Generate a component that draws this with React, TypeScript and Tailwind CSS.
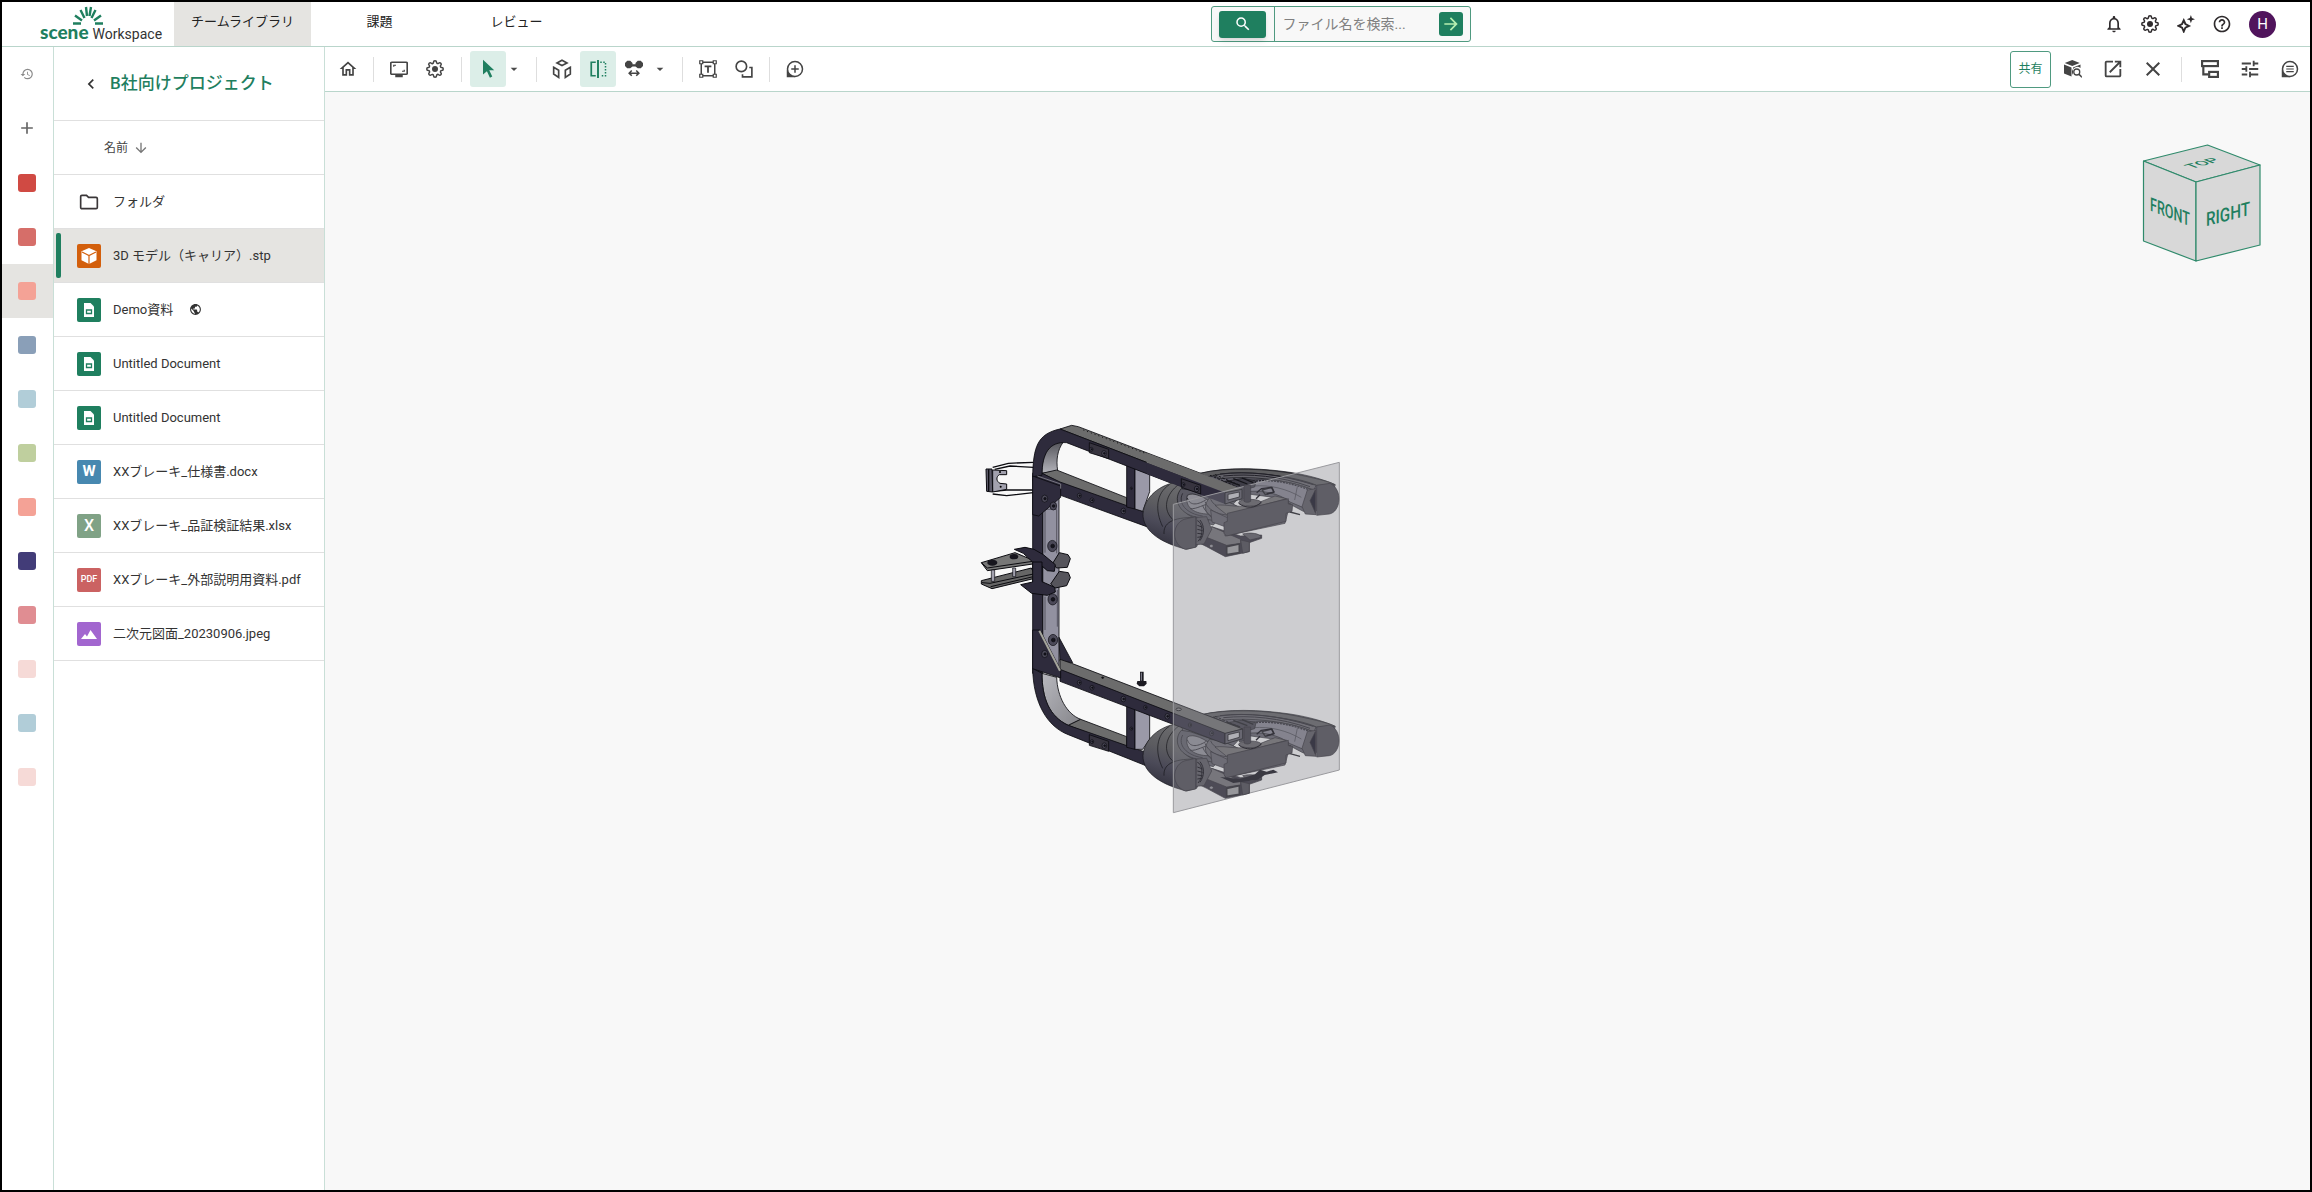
import React, { useState } from 'react';
import {
  MdAdd,
  MdArrowDownward,
  MdArrowDropDown,
  MdArrowForward,
  MdChevronLeft,
  MdClose,
  MdHelpOutline,
  MdHistory,
  MdOpenInNew,
  MdOutlineHome,
  MdOutlineNotifications,
  MdPublic,
  MdSearch,
  MdTune,
} from 'react-icons/md';
import clsx from 'clsx';

type FileKind = 'folder' | 'model' | 'doc' | 'word' | 'excel' | 'pdf' | 'image';

interface FileItem {
  name: string;
  kind: FileKind;
  isPublic?: boolean;
}

const FILES: FileItem[] = [
  { name: 'フォルダ', kind: 'folder' },
  { name: '3D モデル（キャリア）.stp', kind: 'model' },
  { name: 'Demo資料', kind: 'doc', isPublic: true },
  { name: 'Untitled Document', kind: 'doc' },
  { name: 'Untitled Document', kind: 'doc' },
  { name: 'XXブレーキ_仕様書.docx', kind: 'word' },
  { name: 'XXブレーキ_品証検証結果.xlsx', kind: 'excel' },
  { name: 'XXブレーキ_外部説明用資料.pdf', kind: 'pdf' },
  { name: '二次元図面_20230906.jpeg', kind: 'image' },
];

const TEAMS = [
  'bg-[#d04a43]',
  'bg-[#d66e69]',
  'bg-[#f4a296]',
  'bg-[#8a9fb8]',
  'bg-[#b1cdd8]',
  'bg-[#bfcf9e]',
  'bg-[#f4a296]',
  'bg-[#423c78]',
  'bg-[#e08d92]',
  'bg-[#f6dad7]',
  'bg-[#b1cdd8]',
  'bg-[#f6dad7]',
];

const TABS = ['チームライブラリ', '課題', 'レビュー'];

/* ---------- icons ---------- */

const Svg: React.FC<{ size?: number; children: React.ReactNode }> = ({ size = 18, children }) => (
  <svg width={size} height={size} viewBox="0 0 24 24" fill="none" stroke="currentColor" strokeWidth="2" aria-hidden="true">
    {children}
  </svg>
);

const GearIcon = () => (
  <Svg>
    <path d="M19.4 15a1.65 1.65 0 0 0 .33 1.82l.06.06a2 2 0 1 1-2.83 2.83l-.06-.06a1.65 1.65 0 0 0-1.82-.33 1.65 1.65 0 0 0-1 1.51V21a2 2 0 0 1-4 0v-.09A1.65 1.65 0 0 0 9 19.4a1.65 1.65 0 0 0-1.82.33l-.06.06a2 2 0 1 1-2.83-2.83l.06-.06a1.65 1.65 0 0 0 .33-1.82 1.65 1.65 0 0 0-1.51-1H3a2 2 0 0 1 0-4h.09A1.65 1.65 0 0 0 4.6 9a1.65 1.65 0 0 0-.33-1.82l-.06-.06a2 2 0 1 1 2.83-2.83l.06.06a1.65 1.65 0 0 0 1.82.33H9a1.65 1.65 0 0 0 1-1.51V3a2 2 0 0 1 4 0v.09a1.65 1.65 0 0 0 1 1.51 1.65 1.65 0 0 0 1.82-.33l.06-.06a2 2 0 1 1 2.83 2.83l-.06.06a1.65 1.65 0 0 0-.33 1.82V9a1.65 1.65 0 0 0 1.51 1H21a2 2 0 0 1 0 4h-.09a1.65 1.65 0 0 0-1.51 1z" />
    <circle cx="12" cy="12" r="4" fill="currentColor" stroke="none" />
  </Svg>
);

const SparkleIcon = () => (
  <Svg>
    <path d="M9 7l2.2 5L16 14.5l-4.8 2.300L9 22l-2.200-5.200L2 14.5 6.800 12z" strokeWidth="2.500" />
    <path d="M18.500 0l1.400 4.100L24 5.500l-4.100 1.400L18.500 11l-1.400-4.100L13 5.500l4.100-1.400z" fill="currentColor" stroke="none" />
  </Svg>
);

const ScreenIcon = () => (
  <Svg>
    <rect x="1" y="3" width="22" height="16" rx="1.500" strokeWidth="2.300" />
    <path d="M5 9V7h3M19 13v2h-3" strokeWidth="1.600" />
    <path d="M7 21.500h10" strokeWidth="3" />
  </Svg>
);

const CursorIcon = () => (
  <Svg size={20}>
    <path d="M6 1l13.500 12.500h-6l3.600 7.600-2.800 1.300-3.600-7.800L6 18.500z" fill="currentColor" stroke="none" />
  </Svg>
);

const ExplodeIcon = () => (
  <Svg size={20}>
    <path d="M12 1.500l6 3.200-6 3.200-6-3.200zM2 10l6 3.500V22l-6-4zM22 10l-6 3.500V22l6-4z" strokeWidth="2" />
  </Svg>
);

const SectionIcon = () => (
  <Svg>
    <path d="M9 3H3v18h6" strokeWidth="2.300" />
    <path d="M12 0v24" strokeWidth="2.600" />
    <path d="M15 3h7v18h-7" strokeDasharray="2 2" />
  </Svg>
);

const CompareIcon = () => (
  <Svg>
    <path d="M3 1h4l3 3v1.500h4V4l3-3h4l3 3v4l-3 3h-4l-3-2.500h-4L7 11H3L0 8V4z" fill="currentColor" stroke="none" />
    <path d="M6 17.500h12M9 14l-3.500 3.500L9 21M15 14l3.500 3.500L15 21" strokeWidth="2" />
  </Svg>
);

const TextBoxIcon = () => (
  <Svg>
    <path d="M4 3h16M4 21h16M3 4v16M21 4v16" />
    <path d="M1 1h4v4H1zM19 1h4v4h-4zM1 19h4v4H1zM19 19h4v4h-4z" fill="#fff" strokeWidth="1.600" />
    <path d="M7.500 8.500h9M12 8v9" strokeWidth="2.400" />
  </Svg>
);

const ShapesIcon = () => (
  <Svg>
    <circle cx="8.500" cy="8.500" r="7" strokeWidth="2.200" />
    <path d="M19 10h3.500v12.500H10V19" strokeWidth="2.200" />
  </Svg>
);

const CommentAddIcon = () => (
  <Svg>
    <path d="M1 13v10h11z" fill="currentColor" stroke="none" />
    <circle cx="12" cy="12" r="10" fill="#fff" />
    <path d="M12 7v10M7 12h10" />
  </Svg>
);

const CommentListIcon = () => (
  <Svg>
    <path d="M1 13v10h11z" fill="currentColor" stroke="none" />
    <circle cx="12" cy="12" r="10" fill="#fff" />
    <path d="M7 8.500h10M7 12h10M7 15.500h10" strokeWidth="1.500" />
  </Svg>
);

const ModelSearchIcon = () => (
  <Svg>
    <path d="M11 0l10 4-10 4L1 4z" fill="currentColor" stroke="none" />
    <path d="M0 6l10 4v12L0 18zM12 10l10-4v4.500a7 7 0 0 0-10 9.500z" fill="currentColor" stroke="none" />
    <circle cx="17" cy="16" r="4" strokeWidth="1.700" />
    <path d="M19.800 18.800L24 23" />
  </Svg>
);

const TreeIcon = () => (
  <Svg size={20}>
    <rect x="2.500" y="2.500" width="19" height="6" strokeWidth="2.600" />
    <rect x="11" y="15.500" width="10.500" height="6" strokeWidth="2.600" />
    <path d="M4 9v9.500h6" strokeWidth="2.600" />
  </Svg>
);

const FolderIcon = () => (
  <Svg size={20}>
    <path d="M2 5.500c0-.8.7-1.500 1.500-1.500H9l2.500 2.500h9c.8 0 1.500.7 1.500 1.500v10.500c0 .8-.7 1.500-1.500 1.500h-17c-.8 0-1.500-.7-1.500-1.500z" />
  </Svg>
);

const TILE = 'flex h-6 w-6 items-center justify-center rounded-[2px] text-white';

const FileIcon: React.FC<{ kind: FileKind }> = ({ kind }) => {
  switch (kind) {
    case 'folder':
      return <span className="flex h-6 w-6 items-center justify-center text-[#3a3638]"><FolderIcon /></span>;
    case 'model':
      return (
        <span className={clsx(TILE, 'bg-[#d35f0c]')}>
          <svg width="18" height="18" viewBox="0 0 18 18" aria-hidden="true">
            <path d="M9 1l7.500 3.300v9L9 17l-7.500-3.700v-9z" fill="#fff" />
            <path d="M2 5l7 3.500L16 5M9 8.500V17" fill="none" stroke="#d35f0c" strokeWidth="1.200" />
          </svg>
        </span>
      );
    case 'doc':
      return (
        <span className={clsx(TILE, 'bg-[#1f7f5f]')}>
          <svg width="12" height="16" viewBox="0 0 12 16" aria-hidden="true">
            <path d="M1 1h6.500L11 4.500V15H1z" fill="#fff" />
            <path d="M3.500 8h5v3.500h-5z" fill="none" stroke="#1f7f5f" strokeWidth="1.300" />
          </svg>
        </span>
      );
    case 'word':
      return <span className={clsx(TILE, 'bg-[#4788b0] text-[15px] font-bold')}>W</span>;
    case 'excel':
      return <span className={clsx(TILE, 'bg-[#80a286] text-[16px] font-medium')}>X</span>;
    case 'pdf':
      return <span className={clsx(TILE, 'bg-[#cb6262] text-[9px] font-medium')}>PDF</span>;
    default:
      return (
        <span className={clsx(TILE, 'bg-[#a266cf]')}>
          <svg width="16" height="16" viewBox="0 0 16 16" aria-hidden="true">
            <path d="M0 13l4-5 2 2.500L9.500 4l6.500 9z" fill="#fff" />
          </svg>
        </span>
      );
  }
};

/* ---------- header ---------- */

const Logo = () => (
  <a href="#" className="flex w-[172px] shrink-0 flex-col items-start pt-1 pl-[38px] no-underline">
    <svg width="32" height="19" viewBox="0 0 32 19" fill="none" stroke="#1f7f5f" strokeWidth="2.400" className="ml-8" aria-hidden="true">
      <path d="M1 17.500h8M23 17.500h8M3 9.500l7 5M29 9.500l-7 5M8.500 4l4 8M23.500 4l-4 8M14 1l1 9M19 1l-1.500 9" />
    </svg>
    <span className="flex items-baseline gap-1">
      <span className="font-['Lato'] text-[19px] leading-[14px] font-black text-[#1f7f5f]">scene</span>
      <span className="text-[14px] leading-[14px] text-[#333]">Workspace</span>
    </span>
  </a>
);

const HeaderButton: React.FC<{ label: string; children: React.ReactNode }> = ({ label, children }) => (
  <button type="button" aria-label={label} className="flex h-9 w-9 items-center justify-center text-[#2f2b2d]">
    {children}
  </button>
);

const Header = () => (
  <header className="flex h-[45px] items-stretch border-b border-[#b9d5cb] bg-white">
    <Logo />
    <nav className="flex">
      {TABS.map((tab, i) => (
        <a
          key={tab}
          href="#"
          className={clsx(
            'flex w-[137px] items-center justify-center pb-1 text-[13px] text-[#222]',
            i === 0 && 'bg-[#e5e4e1]',
          )}
        >
          {tab}
        </a>
      ))}
    </nav>
    <div className="flex flex-1 items-center justify-center">
      <form className="flex h-9 w-[260px] items-center rounded-[3px] border border-[#4f9a80] bg-[#f8f8f8]" onSubmit={(e) => e.preventDefault()}>
        <div className="flex h-full w-[63px] items-center justify-center border-r border-[#4f9a80]">
          <button type="button" aria-label="検索" className="flex h-[27px] w-[47px] items-center justify-center rounded-[3px] bg-[#1f7f5f] text-white shadow-md">
            <MdSearch size={18} />
          </button>
        </div>
        <input
          aria-label="ファイル名を検索"
          placeholder="ファイル名を検索..."
          className="min-w-0 flex-1 bg-transparent pl-2 text-[14px] text-[#333] outline-none placeholder:text-[#808080]"
        />
        <button type="submit" aria-label="実行" className="mr-[7px] flex h-6 w-6 items-center justify-center rounded-[3px] bg-[#1f7f5f] text-[#b7f0b0]">
          <MdArrowForward size={20} />
        </button>
      </form>
    </div>
    <div className="flex items-center pr-[34px]">
      <HeaderButton label="通知"><MdOutlineNotifications size={20} /></HeaderButton>
      <HeaderButton label="設定"><GearIcon /></HeaderButton>
      <HeaderButton label="AI"><SparkleIcon /></HeaderButton>
      <HeaderButton label="ヘルプ"><MdHelpOutline size={20} /></HeaderButton>
      <button type="button" className="ml-[9px] flex h-[27px] w-[27px] items-center justify-center rounded-full bg-[#50145c] text-[15px] text-white">
        H
      </button>
    </div>
  </header>
);

/* ---------- left columns ---------- */

const TeamRail = () => (
  <nav className="flex w-[52px] shrink-0 flex-col border-r border-[#c9dfd7] bg-white">
    <button type="button" aria-label="履歴" className="flex h-[54px] items-center justify-center pr-px text-[#8a8a8a]">
      <MdHistory size={14} />
    </button>
    <button type="button" aria-label="追加" className="flex h-[54px] items-center justify-center pr-px text-[#666]">
      <MdAdd size={20} />
    </button>
    <div className="flex flex-col pt-px">
      {TEAMS.map((color, i) => (
        <button
          key={i}
          type="button"
          aria-label={`チーム ${i + 1}`}
          className={clsx('flex h-[54px] items-center justify-center pr-px', i === 2 && 'bg-[#e5e4e1]')}
        >
          <span className={clsx('h-[18px] w-[18px] rounded-[3px]', color)} />
        </button>
      ))}
    </div>
  </nav>
);

const FilePanel = () => {
  const [selected, setSelected] = useState(1);
  return (
    <aside className="w-[271px] shrink-0 border-r border-[#c9dfd7] bg-white">
      <div className="flex h-[74px] items-center border-b border-[#e0e0e0] pl-[27px]">
        <button type="button" aria-label="戻る" className="flex h-5 w-5 items-center justify-center text-[#333]">
          <MdChevronLeft size={20} />
        </button>
        <h1 className="ml-[9px] text-[17px] font-medium text-[#1f7f5f]">B社向けプロジェクト</h1>
      </div>
      <button type="button" className="flex h-[54px] w-full items-center gap-[5px] border-b border-[#e0e0e0] pl-[50px] text-[12px] text-[#444]">
        名前
        <MdArrowDownward size={16} className="text-[#777]" />
      </button>
      <ul>
        {FILES.map((file, i) => (
          <li key={i}>
            <button
              type="button"
              onClick={() => setSelected(i)}
              className={clsx(
                'relative flex h-[54px] w-full items-center gap-3 border-b border-[#e0e0e0] pl-[23px] text-[13px] text-[#333]',
                selected === i && 'bg-[#e5e4e1]',
              )}
            >
              {selected === i && <span className="absolute top-1 bottom-1 left-[2px] w-[5px] rounded-[2px] bg-[#1f7f5f]" />}
              <FileIcon kind={file.kind} />
              <span>{file.name}</span>
              {file.isPublic && <MdPublic size={13} className="ml-1" />}
            </button>
          </li>
        ))}
      </ul>
    </aside>
  );
};

/* ---------- viewer toolbar ---------- */

const ToolButton: React.FC<{ label: string; active?: boolean; children: React.ReactNode }> = ({ label, active, children }) => (
  <button
    type="button"
    aria-label={label}
    className={clsx(
      'flex h-9 w-9 items-center justify-center rounded-[3px]',
      active ? 'bg-[#dceee8] text-[#1f7f5f]' : 'text-[#444]',
    )}
  >
    {children}
  </button>
);

const Caret: React.FC<{ label: string }> = ({ label }) => (
  <button type="button" aria-label={label} className="flex h-9 w-[23px] items-center text-[#4a4a4a]">
    <MdArrowDropDown size={16} />
  </button>
);

const Divider: React.FC<{ className?: string }> = ({ className = 'mx-[7px]' }) => (
  <span className={clsx('h-[25px] w-px bg-[#dedede]', className)} />
);

const Toolbar = () => (
  <div className="flex h-[45px] items-center border-b border-[#b9d5cb] bg-white pr-[2px] pl-[5px]">
    <ToolButton label="ホーム"><MdOutlineHome size={20} /></ToolButton>
    <Divider />
    <ToolButton label="表示"><ScreenIcon /></ToolButton>
    <ToolButton label="設定"><GearIcon /></ToolButton>
    <Divider className="mx-2" />
    <ToolButton label="選択" active><CursorIcon /></ToolButton>
    <Caret label="選択メニュー" />
    <Divider />
    <ToolButton label="分解"><ExplodeIcon /></ToolButton>
    <ToolButton label="断面" active><SectionIcon /></ToolButton>
    <ToolButton label="計測"><CompareIcon /></ToolButton>
    <Caret label="計測メニュー" />
    <Divider />
    <ToolButton label="テキスト"><TextBoxIcon /></ToolButton>
    <ToolButton label="図形"><ShapesIcon /></ToolButton>
    <Divider />
    <ToolButton label="コメント追加"><CommentAddIcon /></ToolButton>
    <div className="ml-auto flex items-center gap-1">
      <button type="button" className="flex h-[37px] w-[41px] items-center justify-center rounded-[3px] border border-[#4f9a80] text-[12px] text-[#1f7f5f]">
        共有
      </button>
      <ToolButton label="モデル検索"><ModelSearchIcon /></ToolButton>
      <ToolButton label="別ウィンドウで開く"><MdOpenInNew size={22} /></ToolButton>
      <ToolButton label="閉じる"><MdClose size={24} /></ToolButton>
      <Divider className="mx-[6px]" />
      <ToolButton label="ツリー"><TreeIcon /></ToolButton>
      <ToolButton label="調整"><MdTune size={22} /></ToolButton>
      <ToolButton label="コメント"><CommentListIcon /></ToolButton>
    </div>
  </div>
);

/* ---------- 3D scene ---------- */

// Each face is an 80x80 sheet, placed by the matrix of its own plane.
const ViewCube = () => (
  <svg width="160" height="150" viewBox="0 0 160 150" className="absolute top-[38px] right-[30px]" aria-label="ビューキューブ">
    <g fill="#d8d8d8" stroke="#2f8a6b" strokeWidth="1.200" strokeLinejoin="round">
      <path d="M23.500 31L87.500 15 140 35 76 52z" />
      <path d="M23.500 31L76 52v79L23.500 111z" />
      <path d="M76 52l64-17v80l-64 16z" />
    </g>
    <g fill="#1f7f5f" fontFamily="Roboto, sans-serif" fontSize="19" fontWeight="500" textAnchor="middle">
      <text transform="matrix(.66 .26 0 1 23.500 31)" x="40" y="47">FRONT</text>
      <text transform="matrix(.8 -.21 0 1 76 52)" x="40" y="47">RIGHT</text>
      <text transform="matrix(.8 -.21 .66 .26 23.500 31)" x="40" y="47">TOP</text>
    </g>
  </svg>
);

const Screw: React.FC<{ x: number; y: number; r?: number }> = ({ x, y, r = 7 }) => (
  <g stroke="#0b0b10" strokeWidth="2">
    <ellipse cx={x} cy={y} rx={r} ry={r * 1.2} fill="#4b4958" />
    <circle cx={x + 1} cy={y} r={r / 2.5} fill="#16151d" />
  </g>
);

const WheelBack = () => (
  <g stroke="#15151a" strokeWidth="2" strokeLinejoin="round">
    {/* far arc */}
    <path d="M720 190C800 170 900 174 990 187C1050 196 1100 212 1126 224L1100 300L1030 304L985 280L940 262L850 250L760 345L700 330L650 300L640 222z" fill="#5c5b66" />
    <path d="M720 190C800 170 930 176 1010 193S1110 216 1124 224L1070 226C1010 200 880 180 740 200z" fill="#5d5d5f" />
    <path d="M760 196C850 180 960 190 1068 226L1062 240C980 208 870 196 780 206z" fill="#64636a" />
    <path d="M780 192C860 182 960 192 1060 224M790 198C870 190 960 198 1050 230" fill="none" stroke="#222129" strokeWidth="3" />
    <path d="M860 212C930 204 1000 216 1052 238L1028 292L990 276C960 250 900 238 860 246z" fill="#83828f" />
    <path d="M870 215C930 206 990 218 1044 238" fill="none" stroke="#26252d" strokeWidth="4" strokeDasharray="6 3" />
    <path d="M880 228C930 224 980 236 1024 262M1012 230L1004 270" fill="none" stroke="#34333b" />
    {/* near tyre */}
    <path d="M655 216C600 222 552 262 549 312C548 356 590 396 680 418L710 410L745 330L700 322C668 310 650 280 668 232z" fill="url(#tire)" />
    <path d="M628 224C588 250 584 300 608 350M658 222C616 252 606 300 640 330M612 372C610 340 634 322 706 322" fill="none" />
    <path d="M664 236C640 262 650 310 712 322L800 340L850 300C830 285 770 262 755 262L690 240z" fill="#5a5963" />
    <path d="M682 256C700 244 735 262 762 284L744 312C710 312 672 296 682 256z" fill="#8f8e96" />
    <path d="M668 250C652 280 680 312 728 318M682 264C690 290 716 284 740 268M690 296C712 298 730 282 755 280" fill="none" stroke="#2f2e36" strokeWidth="3" />
    <path d="M748 264C780 262 830 285 850 300L800 340C750 330 718 300 748 264z" fill="#66656c" />
    <path d="M735 275C745 300 770 312 800 315M728 287C740 315 765 330 796 332M752 268C762 290 790 300 820 300" fill="none" stroke="#2f2e36" strokeWidth="3" />
    {/* axle block */}
    <path d="M790 215l60-10 38 8-4 18-30 8v28l-16 4v-30l-48-8z" fill="#3e3d47" />
    <path d="M800 212l40 14M820 206l42 16M846 204l34 14M906 240l30-8 6 14-26 8zM990 280v26l30 8" fill="none" strokeWidth="4" />
    <path d="M740 200l80 36M750 196l80 34M765 194l70 30" fill="none" strokeWidth="3" strokeDasharray="8 4" />
  </g>
);

// Faces cut by the section plane, drawn over it.
const WheelCut = () => (
  <g stroke="#45444b" strokeWidth="2" strokeLinejoin="round">
    <path d="M755 350L842 378L905 375L905 385L868 398L868 425L796 440L740 410L716 398z" fill="#4d4b56" />
    <path d="M755 350L842 388L842 400L800 406L730 378z" fill="#77767c" />
    <path d="M842 390L868 396V424L848 430z" fill="#5d5c64" />
    <path d="M800 410L838 402V428L800 434z" fill="#97979b" strokeWidth="5" />
    <path d="M848 372C870 366 900 370 904 382L870 390z" fill="#696870" />
    <ellipse cx="754" cy="408" rx="6" ry="5" fill="#8d8c94" />
    <path d="M752 300L800 322L945 262L985 272L988 290L975 340L795 378L795 350L756 336z" fill="#6d6c75" />
    <path d="M765 286C800 280 840 300 895 278L945 258L980 266L800 314z" fill="#77767a" />
    <path d="M802 310L985 266L985 282L998 284L996 304L978 310L978 334L800 378L792 370V338L802 334z" fill="#5f5e66" />
    <ellipse cx="870" cy="278" rx="34" ry="10" fill="#6c6b71" />
    <path d="M852 226h20v48c-6 4-14 4-20 0z" fill="#54535c" />
    <path d="M836 280c20 16 50 16 68-4" fill="none" stroke="#2f2e36" strokeWidth="3" />
    <path d="M890 248l14-12 30-4 8 14-22 6M900 254l-12 12" fill="none" stroke="#33323a" strokeWidth="4" />
    <path d="M710 322L740 320L755 358L732 402L708 404z" fill="#66656d" />
    <path d="M712 332c16 4 20 44 2 62M720 330c14 18 14 42 0 62M712 346l16 6M712 358l16 4M712 370l16 2M712 382l14-2" fill="none" stroke="#33323a" strokeWidth="3" />
    <path d="M672 328L707 320V412L676 418C634 404 634 344 672 328z" fill="#5f5e66" />
    <path d="M1042 240L1068 236V314L1036 312L1026 290z" fill="#66656d" />
    <path d="M1066 240V308L1050 272z" fill="#3a3946" />
    <path d="M1070 226L1110 220C1150 238 1142 306 1108 312L1070 316z" fill="#5f5e66" />
  </g>
);

const CarrierModel = () => (
  <svg width="400" height="420" viewBox="0 0 1200 1260" className="absolute top-[318px] left-[635px]" aria-label="キャリア">
    <defs>
      <linearGradient id="tire" x1="0.600" y1="0" x2="0.300" y2="1">
        <stop offset="0" stopColor="#6e6e70" />
        <stop offset="0.400" stopColor="#5c5c60" />
        <stop offset="0.650" stopColor="#4b4a58" />
        <stop offset="1" stopColor="#2f2e3a" />
      </linearGradient>
      <linearGradient id="bend" x1="0" y1="0" x2="0" y2="1">
        <stop offset="0" stopColor="#55555b" />
        <stop offset="1" stopColor="#b4b4bb" />
      </linearGradient>
      <linearGradient id="bendLow" x1="0" y1="0" x2="1" y2="1">
        <stop offset="0" stopColor="#b8b8be" />
        <stop offset="1" stopColor="#85858a" />
      </linearGradient>
    </defs>

    {/* upper mounting bracket */}
    <g stroke="#0b0b10" strokeWidth="4" strokeLinejoin="round">
      <path d="M98 172L145 160L220 157M104 178L150 168L220 172M100 244L140 240L220 240M98 252L140 257L220 248" fill="none" />
      <path d="M98 180L140 182V194L118 194C108 200 108 214 120 220L140 222V238L98 246z" fill="#a2a1ae" strokeWidth="3" />
      <path d="M78 177H96L98 246L80 244z" fill="#5b5968" strokeWidth="3" />
      <path d="M86 178v66" />
    </g>
    <circle cx="120" cy="186" r="3" />
    <circle cx="122" cy="230" r="3" />

    <g stroke="#0b0b10" strokeWidth="2.500" strokeLinejoin="round">
      {/* column */}
      <path d="M248 230H297V770L262 770L248 700z" fill="#9291a0" />
      <path d="M218 190H248V790H218z" fill="#2e2b3c" />
      <path d="M255 318v-20h36M255 318v110M290 300v130M255 560v100M292 540v110" fill="none" stroke="#4c4b56" />

      {/* upper frame */}
      <path d="M310 96C292 120 288 150 293 182L246 190C244 130 270 96 310 96z" fill="url(#bend)" />
      <path d="M246 190L290 180L500 263V292L300 218z" fill="#6c6c6c" />
      <path d="M246 190L300 216L560 308V350L302 256L218 210z" fill="#2e2b3c" />
      <path d="M500 166L525 176V297L500 291z" fill="#2e2b3c" />
      <path d="M525 176L569 192V245L548 304L525 297z" fill="#9a99a8" />
      <path d="M300 57L335 46L355 50L848 238L795 248z" fill="#6c6c6c" />
      <path d="M218 200C220 110 232 72 300 57L795 248V282L320 98C268 94 246 130 246 196z" fill="#2e2b3c" />
      <path d="M370 60L720 192" stroke="#111" strokeWidth="3" strokeDasharray="3 9" />
      <path d="M388 98L446 118V146L388 128z" fill="#37343f" />
      <path d="M218 198L302 228V262L236 318L218 314z" fill="#2e2b3c" />
      <path d="M232 198L302 222V236" fill="none" stroke="#77767f" strokeWidth="3" />
    </g>
    <Screw x={254} y={266} r={9} />
    <Screw x={280} y={288} r={10} />
    <Screw x={394} y={118} r={5} />
    <Screw x={432} y={130} r={7} />
    <Screw x={358} y={257} r={6} />
    <Screw x={396} y={271} r={6} />
    <Screw x={490} y={303} r={7} />
    <Screw x={514} y={235} r={3} />

    {/* centre clamp */}
    <g stroke="#0b0b10" strokeWidth="3" strokeLinejoin="round">
      <path d="M298 428L324 434L331 446L322 472L290 474L278 460z" fill="#56555c" />
      <path d="M298 484L325 488L331 503L320 527L285 534L272 522z" fill="#56555c" />
      <path d="M64 458L165 428L222 452L218 462L82 482z" fill="#777" />
      <path d="M64 458L82 474L218 454" fill="none" />
      <path d="M64 512L214 474L220 486V506L96 536L64 522z" fill="#666" />
      <path d="M66 518L90 520L220 492M92 530L220 500" fill="none" strokeWidth="3" />
      <path d="M94 480h10v34H94zM158 474h9v26h-9z" fill="#a2a1ae" strokeWidth="2" />
      <path d="M163 418L195 412L222 418L250 434L286 464L283 484L262 482L246 468L218 456L190 430z" fill="#2e2b3c" />
      <path d="M218 456H246V515L284 532L286 546L262 556L215 550L182 524L218 516z" fill="#2e2b3c" />
    </g>
    <ellipse cx="97" cy="458" rx="15" ry="9" fill="#16151d" />
    <ellipse cx="162" cy="440" rx="13" ry="8" fill="#16151d" />
    <Screw x={277} y={408} r={14} />
    <Screw x={278} y={568} r={14} />
    <Screw x={279} y={690} r={14} />

    {/* lower frame */}
    <g transform="translate(0 630)" stroke="#0b0b10" strokeWidth="2.500" strokeLinejoin="round">
      <path d="M297 52L338 128L300 124z" fill="#2e2b3c" />
      <path d="M246 160L290 172C292 230 320 282 362 298L325 316C268 290 246 235 246 160z" fill="url(#bendLow)" />
      <path d="M325 316L362 298L500 350V386z" fill="#6c6c6c" />
      <path d="M218 145L246 160C246 235 268 290 325 316L555 396V436L325 344C262 320 220 250 218 145z" fill="#2e2b3c" />
      <path d="M500 256L525 264V388L500 382z" fill="#2e2b3c" />
      <path d="M525 264L569 286V358L548 388L525 388z" fill="#9a99a8" />
      <path d="M388 344L446 364V394L388 376z" fill="#37343f" />
    </g>
    <Screw x={396} y={995} r={5} />
    <Screw x={433} y={1007} r={7} />
    <Screw x={514} y={956} r={4} />

    <WheelBack />
    <g transform="translate(0 725)">
      <WheelBack />
    </g>

    {/* rails passing in front of the wheels */}
    <g stroke="#0b0b10" strokeWidth="2.500" strokeLinejoin="round">
      <path d="M560 129L600 144L848 238L795 248L560 158z" fill="#6c6c6c" stroke="none" />
      <path d="M560 158L795 248V282L560 191z" fill="#2e2b3c" stroke="none" />
      <path d="M664 206L722 226V252L664 232z" fill="#37343f" />
      <path d="M795 248L846 238V266L795 282z" fill="#56555f" />
      <path d="M804 253L838 246V261L804 270z" fill="#c9c9cd" />
      <path d="M300 748L335 760L848 957L795 972L300 784z" fill="#6c6c6c" />
      <path d="M300 778L795 970V1002L300 814z" fill="#2e2b3c" />
      <path d="M795 970L848 957V986L795 1002z" fill="#56555f" />
      <path d="M804 974L838 966V982L804 992z" fill="#c9c9cd" />
      <path d="M218 660L240 660L302 780V804L218 776z" fill="#2e2b3c" />
      <path d="M238 662L300 782" stroke="#a5a59c" strokeWidth="6" />
      <ellipse cx="656" cy="898" rx="8" ry="4" fill="#8a8a8a" />
      <ellipse cx="428" cy="803" rx="3" ry="2" fill="#111" />
    </g>
    <Screw x={670} y={224} r={5} />
    <Screw x={710} y={237} r={7} />
    <Screw x={254} y={732} r={9} />
    <Screw x={358} y={818} r={6} />
    <Screw x={396} y={833} r={6} />
    <Screw x={490} y={867} r={7} />
    <Screw x={556} y={892} r={5} />
    <Screw x={622} y={919} r={7} />
    <Screw x={690} y={945} r={5} />
    <Screw x={755} y={970} r={6} />

    {/* loose bolt */}
    <path d="M540 785h11v28h8l1 8-8 8h-14l-8-8 2-8h8z" fill="#1c1b22" />
    <path d="M544 788v24" stroke="#8a8a99" strokeWidth="3" />

    {/* section plane */}
    <path d="M640 283L1138 157V1080L640 1208z" fill="#87878f" fillOpacity="0.380" stroke="#9a9a9e" strokeWidth="3" />
    <WheelCut />
    <g transform="translate(0 725)">
      <WheelCut />
      <path d="M780 376l60 6 45-14 15-14 20 6 20-6 14 8-40 8-20 14-74 10z" fill="#3a3942" />
    </g>
  </svg>
);

export default function App() {
  return (
    <div className="flex min-h-screen flex-col border-2 border-black bg-white font-[Roboto,'Noto_Sans_CJK_JP',sans-serif]">
      <Header />
      <div className="flex flex-1 items-stretch">
        <TeamRail />
        <FilePanel />
        <section className="flex min-w-0 flex-1 flex-col">
          <Toolbar />
          <main className="relative flex-1 overflow-hidden bg-[#f8f8f8]">
            <CarrierModel />
            <ViewCube />
          </main>
        </section>
      </div>
    </div>
  );
}
